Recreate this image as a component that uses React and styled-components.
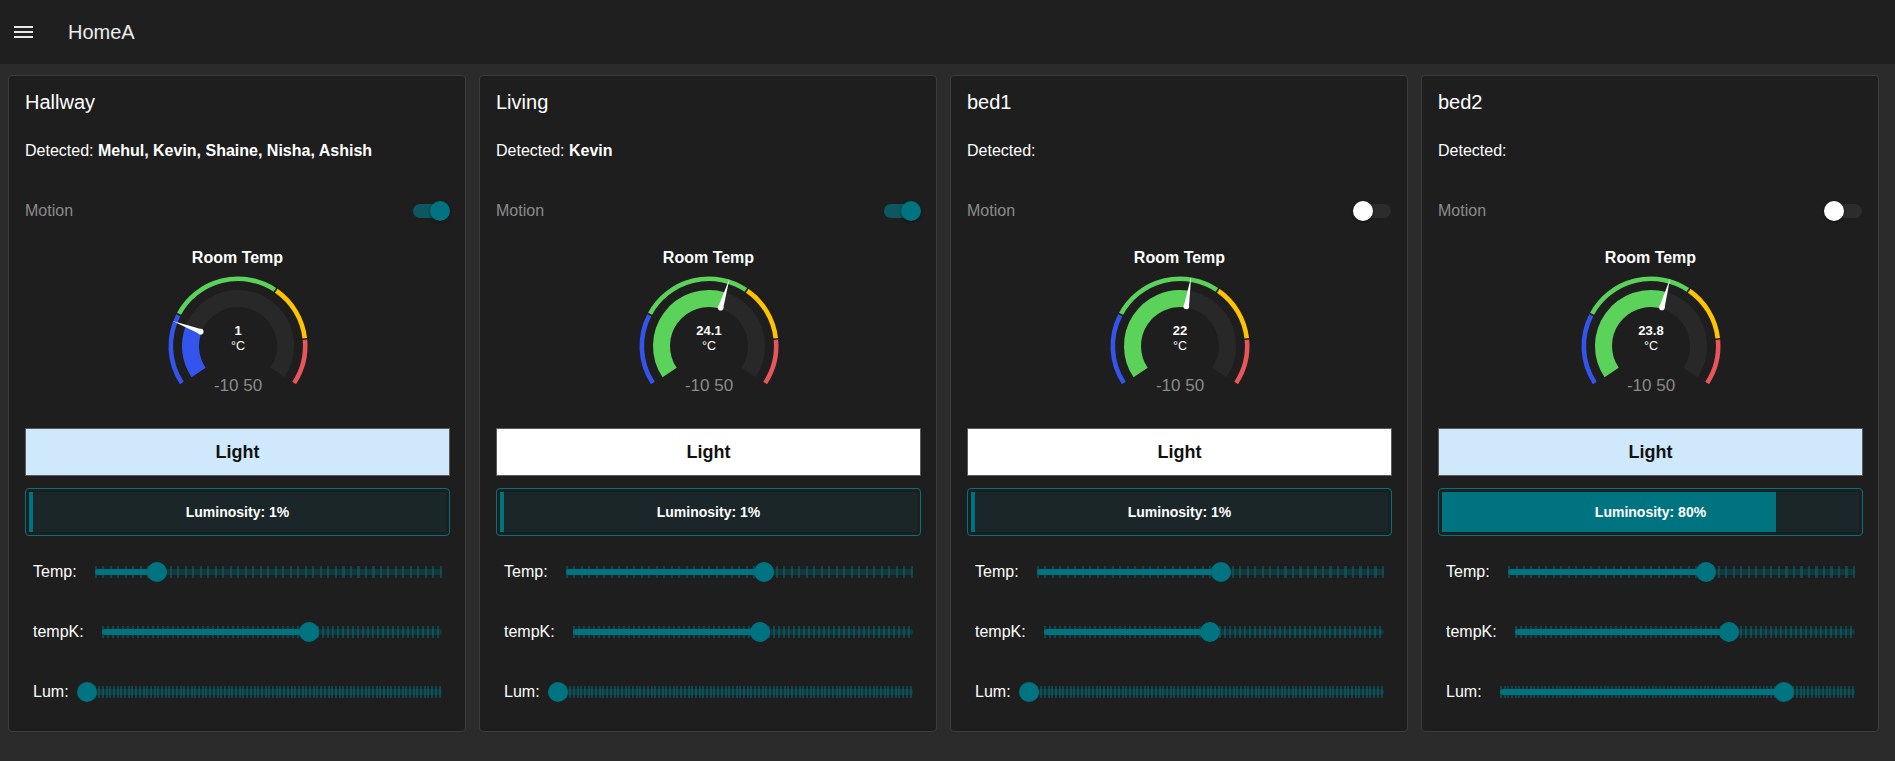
import React from 'react'
import styled, { createGlobalStyle } from 'styled-components'

const GlobalStyle = createGlobalStyle`
  html, body {
    margin: 0;
    background: #2b2b2b;
  }
  body {
    font-family: 'Liberation Sans', Arial, sans-serif;
    color: #fff;
  }
`

const TEAL = '#007380'

const rooms = [
  {
    name: 'Hallway',
    detected: 'Mehul, Kevin, Shaine, Nisha, Ashish',
    motion: true,
    temp: 1,
    light: true,
    lum: 1,
    sliders: { temp: 18, tempK: 61, lum: 0 },
  },
  {
    name: 'Living',
    detected: 'Kevin',
    motion: true,
    temp: 24.1,
    light: false,
    lum: 1,
    sliders: { temp: 57, tempK: 55, lum: 0 },
  },
  {
    name: 'bed1',
    detected: '',
    motion: false,
    temp: 22,
    light: false,
    lum: 1,
    sliders: { temp: 53, tempK: 49, lum: 0 },
  },
  {
    name: 'bed2',
    detected: '',
    motion: false,
    temp: 23.8,
    light: true,
    lum: 80,
    sliders: { temp: 57, tempK: 63, lum: 80 },
  },
]

const TopBar = styled.header`
  height: 64px;
  background: #1f1f1f;
  display: flex;
  align-items: center;
  padding-left: 14px;
`

const AppTitle = styled.div`
  margin-left: 35px;
  font-size: 20px;
  color: #ececec;
`

const Grid = styled.main`
  display: grid;
  grid-template-columns: repeat(4, 458px);
  gap: 13px;
  padding: 11px 8px 0;
`

const Card = styled.section`
  background: #1e1e1e;
  border: 1px solid #3c3c3c;
  border-radius: 4px;
  padding: 2px 15px 9px 16px;
  display: flex;
  flex-direction: column;
`

const CardTitle = styled.div`
  height: 48px;
  display: flex;
  align-items: center;
  font-size: 20px;
`

const DetectedRow = styled.div`
  height: 49px;
  display: flex;
  align-items: center;
  font-size: 16px;
  white-space: pre;
  b {
    font-weight: 700;
  }
`

const MotionRow = styled.div`
  margin-top: 12px;
  height: 48px;
  display: flex;
  align-items: center;
  justify-content: space-between;
  font-size: 16px;
  color: #8c8c8c;
`

const Switch = styled.div`
  position: relative;
  width: 39px;
  height: 20px;
`

const SwitchTrack = styled.div`
  position: absolute;
  left: 2px;
  right: 1px;
  top: 3px;
  height: 14px;
  border-radius: 7px;
  background: ${(p) => (p.$on ? '#0d5860' : '#2c2c2c')};
`

const SwitchThumb = styled.div`
  position: absolute;
  top: 0;
  left: ${(p) => (p.$on ? '19px' : '0')};
  width: 20px;
  height: 20px;
  border-radius: 50%;
  background: ${(p) => (p.$on ? TEAL : '#fff')};
  box-shadow: 0 1px 3px rgba(0, 0, 0, 0.5);
`

const GaugeBlock = styled.div`
  height: 193px;
  display: flex;
  flex-direction: column;
  align-items: center;
`

const GaugeTitle = styled.div`
  margin-top: 13px;
  line-height: 20px;
  font-size: 16px;
  font-weight: 700;
`

const GaugeSvg = styled.svg`
  display: block;
  text {
    font-family: 'Liberation Sans', Arial, sans-serif;
  }
`

const LightButton = styled.button`
  height: 48px;
  width: 100%;
  border: 1px solid #5a5a5a;
  background: ${(p) => (p.$on ? '#cfe8fc' : '#ffffff')};
  color: #111;
  font-family: 'Liberation Sans', Arial, sans-serif;
  font-size: 18px;
  font-weight: 700;
  padding: 0;
  cursor: pointer;
`

const LumBar = styled.div`
  position: relative;
  margin-top: 12px;
  height: 48px;
  box-sizing: border-box;
  border: 1px solid ${TEAL};
  border-radius: 4px;
  padding: 3px;
  display: flex;
`

const LumInner = styled.div`
  flex: 1;
  background: #1b2628;
  display: flex;
`

const LumFill = styled.div`
  background: ${TEAL};
`

const LumText = styled.div`
  position: absolute;
  inset: 0;
  display: flex;
  align-items: center;
  justify-content: center;
  font-size: 14px;
  font-weight: 700;
`

const Sliders = styled.div`
  margin-top: 6px;
`

const SliderRow = styled.div`
  height: 60px;
  display: flex;
  align-items: center;
  padding: 0 8px;
  font-size: 16px;
`

const Track = styled.div`
  position: relative;
  flex: 1;
  margin-left: 18px;
  height: 12px;
  background: repeating-linear-gradient(
    to right,
    rgba(0, 115, 128, 0.45) 0 2px,
    transparent 2px ${(p) => p.$step}px
  );
`

const TrackBand = styled.div`
  position: absolute;
  left: 0;
  right: 0;
  top: 3px;
  height: 6px;
  border-radius: 3px;
  background: rgba(0, 115, 128, 0.3);
`

const TrackFill = styled.div`
  position: absolute;
  left: 0;
  top: 3px;
  height: 6px;
  border-radius: 3px;
  background: ${TEAL};
`

const Thumb = styled.div`
  position: absolute;
  top: -4px;
  width: 20px;
  height: 20px;
  margin-left: -10px;
  border-radius: 50%;
  background: ${TEAL};
`

const MenuIcon = () => (
  <svg width="19" height="14" viewBox="0 0 19 14">
    <rect x="0" y="1" width="19" height="2" fill="#e8e8e8" />
    <rect x="0" y="6" width="19" height="2" fill="#e8e8e8" />
    <rect x="0" y="11" width="19" height="2" fill="#e8e8e8" />
  </svg>
)

// gauge geometry, angles in degrees clockwise from top
const CX = 80
const CY = 78
const START = -124
const END = 124
const segments = [
  [-124, -62, '#3454ee'],
  [-62, 34, '#5bd35b'],
  [34, 84, '#ffc400'],
  [84, 124, '#e8555a'],
]

const polar = (r, a) => {
  const t = (a * Math.PI) / 180
  return [CX + r * Math.sin(t), CY - r * Math.cos(t)]
}

const arc = (r, a0, a1) => {
  const [x0, y0] = polar(r, a0)
  const [x1, y1] = polar(r, a1)
  const large = a1 - a0 > 180 ? 1 : 0
  return `M${x0.toFixed(2)} ${y0.toFixed(2)} A${r} ${r} 0 ${large} 1 ${x1.toFixed(2)} ${y1.toFixed(2)}`
}

const valueAngle = (v) => Math.max(START, Math.min(END, -72.7 + 3.72 * v))

const Gauge = ({ value }) => {
  const a = valueAngle(value)
  const color = (segments.find((s) => a <= s[1]) || segments[3])[2]
  const tip = polar(70, a)
  const base = polar(40, a)
  const t = (a * Math.PI) / 180
  const px = Math.cos(t) * 2.6
  const py = Math.sin(t) * 2.6
  const needle = `${tip[0]},${tip[1]} ${base[0] + px},${base[1] + py} ${base[0] - px},${base[1] - py}`
  return (
    <GaugeSvg width="160" height="160" viewBox="0 0 160 160">
      {segments.map(([s, e, c]) => (
        <path key={s} d={arc(67.2, s + 0.7, e - 0.7)} stroke={c} strokeWidth="4.6" fill="none" />
      ))}
      <path d={arc(47.5, START, END)} stroke="#282828" strokeWidth="17" fill="none" />
      <path d={arc(47.5, START, a)} stroke={color} strokeWidth="17" fill="none" />
      <polygon points={needle} fill="#fff" />
      <circle cx={base[0]} cy={base[1]} r="2.8" fill="#fff" />
      <text x={CX} y="67" textAnchor="middle" fontSize="13" fontWeight="700" fill="#fff">
        {value}
      </text>
      <text x={CX} y="82" textAnchor="middle" fontSize="12.5" fill="#fff">
        °C
      </text>
      <text x={CX} y="123" textAnchor="middle" fontSize="17" fill="#8a8a8a">
        -10 50
      </text>
    </GaugeSvg>
  )
}

const Slider = ({ label, value, step }) => (
  <SliderRow>
    <span>{label}</span>
    <Track $step={step}>
      <TrackBand />
      <TrackFill style={{ width: `${value}%` }} />
      <Thumb style={{ left: `${value}%` }} />
    </Track>
  </SliderRow>
)

const RoomCard = ({ room }) => (
  <Card>
    <CardTitle>{room.name}</CardTitle>
    <DetectedRow>
      Detected: <b>{room.detected}</b>
    </DetectedRow>
    <MotionRow>
      <span>Motion</span>
      <Switch>
        <SwitchTrack $on={room.motion} />
        <SwitchThumb $on={room.motion} />
      </Switch>
    </MotionRow>
    <GaugeBlock>
      <GaugeTitle>Room Temp</GaugeTitle>
      <Gauge value={room.temp} />
    </GaugeBlock>
    <LightButton $on={room.light}>Light</LightButton>
    <LumBar>
      <LumInner>
        <LumFill style={{ width: `${room.lum}%` }} />
      </LumInner>
      <LumText>Luminosity: {room.lum}%</LumText>
    </LumBar>
    <Sliders>
      <Slider label="Temp:" value={room.sliders.temp} step={7.5} />
      <Slider label="tempK:" value={room.sliders.tempK} step={5} />
      <Slider label="Lum:" value={room.sliders.lum} step={3.7} />
    </Sliders>
  </Card>
)

export default function App() {
  return (
    <>
      <GlobalStyle />
      <TopBar>
        <MenuIcon />
        <AppTitle>HomeA</AppTitle>
      </TopBar>
      <Grid>
        {rooms.map((r) => (
          <RoomCard key={r.name} room={r} />
        ))}
      </Grid>
    </>
  )
}
